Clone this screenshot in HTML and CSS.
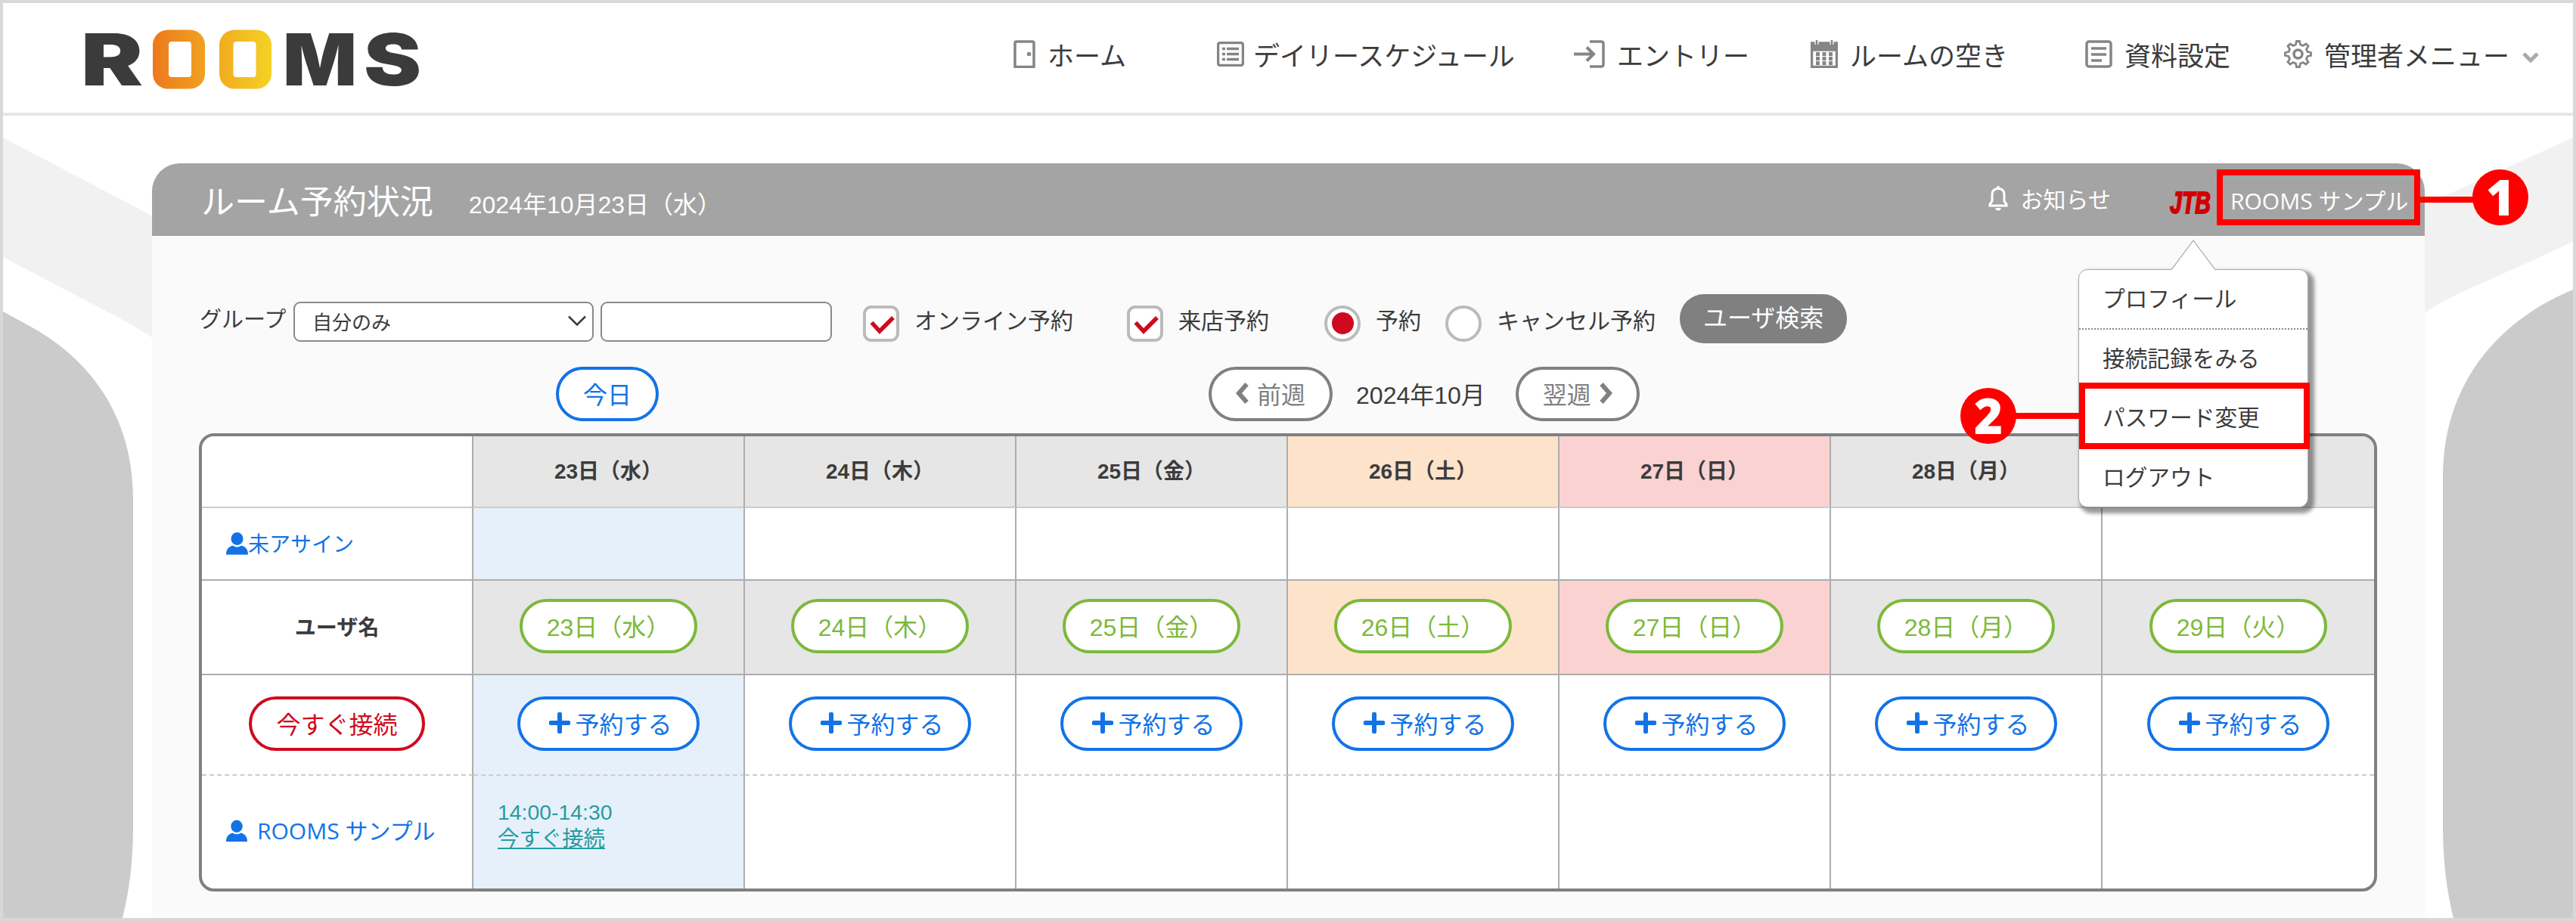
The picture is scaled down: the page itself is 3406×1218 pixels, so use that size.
FILE: index.html
```
<!DOCTYPE html>
<html lang="ja">
<head>
  <meta charset="UTF-8">
  <meta name="viewport" content="width=device-width, initial-scale=1.0">
  <title>ルーム予約状況 - ROOMS</title>
  <link rel="stylesheet" href="styles.css">
</head>
<body>
  <svg class="defs" width="0" height="0">
    <symbol id="person" viewBox="0 0 29 30">
      <ellipse cx="14.500" cy="8.500" rx="8" ry="8.500"/>
      <path d="M0 29.500C0 22 4 18.500 9 17.500Q14.500 21.500 20 17.500C25 18.500 29 22 29 29.500Z"/>
    </symbol>
    <symbol id="plus" viewBox="0 0 28 28">
      <path d="M14 2.500V25.500M2.500 14H25.500" fill="none" stroke="currentColor" stroke-width="6" stroke-linecap="round"/>
    </symbol>
    <symbol id="check" viewBox="0 0 34 26">
      <path d="M2.500 9.500L13 21L31 3" fill="none" stroke="currentColor" stroke-width="5.500"/>
    </symbol>
  </svg>

  <svg class="fundo" viewBox="0 0 3398 1210" preserveAspectRatio="none">
    <path fill="#f1f1f1" d="M0 178L200 283V444L168 424L0 336Z"/>
    <path fill="#cbcbcb" d="M0 408L33 426C116 470 172 548 172 656V1086C172 1136 167 1174 158 1210H0Z"/>
    <path fill="#f1f1f1" d="M3398 178L3200 268V411Q3225 394 3250 383L3398 316Z"/>
    <path fill="#cbcbcb" d="M3398 379L3376 389C3286 434 3226 516 3226 626V1086C3226 1136 3231 1174 3240 1210H3398Z"/>
  </svg>

  <header class="header">
    <svg class="logo" width="460" height="100" viewBox="-5 -7 460 100">
      <defs>
        <linearGradient id="grad" gradientUnits="userSpaceOnUse" x1="92" y1="0" x2="250" y2="0">
          <stop offset="0" stop-color="#ee7a1d"/>
          <stop offset="0.500" stop-color="#f1a820"/>
          <stop offset="1" stop-color="#f5d424"/>
        </linearGradient>
      </defs>
      <text x="-5" y="77" textLength="82" lengthAdjust="spacingAndGlyphs">R</text>
      <rect class="porta" x="90" y="3.500" width="69" height="78" rx="20"/>
      <rect class="vao" x="111" y="19" width="30" height="47" rx="4"/>
      <rect class="porta" x="178" y="3.500" width="69" height="78" rx="20"/>
      <rect class="vao" x="196.500" y="19" width="30" height="47" rx="4"/>
      <text x="262" y="77" textLength="98" lengthAdjust="spacingAndGlyphs">M</text>
      <text x="369" y="77" textLength="76" lengthAdjust="spacingAndGlyphs">S</text>
    </svg>
    <nav class="nav">
      <a class="home"><svg width="29" height="37" viewBox="0 0 29 37"><path d="M2 35.500V4Q2 2 4 2H25Q27 2 27 4V35.500Z"/><circle class="cheio" cx="20.500" cy="18.500" r="1"/></svg>ホーム</a>
      <a class="daily"><svg width="36" height="33" viewBox="0 0 36 33"><rect x="1.500" y="1.500" width="33" height="30" rx="3"/><path d="M13 9.500H29M13 16.500H29M13 23.500H29"/><path d="M7 9.500H11M7 16.500H11M7 23.500H11"/></svg>デイリースケジュール</a>
      <a class="entry"><svg width="41" height="37" viewBox="0 0 41 37"><path d="M21 2H36Q39 2 39 5V32Q39 35 36 35H21"/><path stroke-width="4" d="M0 18.500H26M17 9.500L26 18.500L17 27.500"/></svg>エントリー</a>
      <a class="rooms"><svg width="36" height="37" viewBox="0 0 36 37"><path d="M1.500 5H34.500V35.500H1.500Z"/><path class="cheio" d="M1 4H35V13H1Z"/><path stroke="#fff" stroke-width="5" d="M8 0V6M28 0V6"/><path stroke-width="2.500" d="M8 0V6M28 0V6"/><path stroke-width="5" stroke-dasharray="5 3.500" d="M7 18.500H30M7 24.500H30M7 30.500H30"/></svg>ルームの空き</a>
      <a class="docs"><svg width="36" height="37" viewBox="0 0 36 37"><rect x="2" y="2" width="32" height="33" rx="3"/><path stroke-width="3.500" d="M8 11H28M8 19H28M8 27H22"/></svg>資料設定</a>
      <a class="admin"><svg width="37" height="37" viewBox="0 0 37 37"><path stroke-width="2.800" d="M15.500 6L16.500 1.500H20.500L21.500 6L25 7.500L29 5L32 8L29.500 12L31 15.500L35.500 16.500V20.500L31 21.500L29.500 25L32 29L29 32L25 29.500L21.500 31L20.500 35.500H16.500L15.500 31L12 29.500L8 32L5 29L7.500 25L6 21.500L1.500 20.500V16.500L6 15.500L7.500 12L5 8L8 5L12 7.500Z"/><circle cx="18.500" cy="18.500" r="5.500"/></svg>管理者メニュー<svg class="seta" width="22" height="16" viewBox="0 0 22 16"><path d="M2 3L11 12L20 3"/></svg></a>
    </nav>
  </header>

  <main class="painel">
    <div class="titulo">
      <h1>ルーム予約状況</h1>
      <span class="data">2024年10月23日（水）</span>
      <a class="aviso"><svg width="28" height="34" viewBox="0 0 28 34"><path d="M3 27V25L6 21V13C6 7 9.500 4.500 14 4.500S22 7 22 13V21L25 25V27ZM14 4.500V1" fill="none" stroke="#fff" stroke-width="3"/><path d="M10 30H18Q17 33.500 14 33.500T10 30Z" fill="#fff"/></svg>お知らせ</a>
      <div class="usuario">
        <svg class="jtb" width="62" height="42" viewBox="0 0 62 42">
          <text x="3" y="34" textLength="54" lengthAdjust="spacingAndGlyphs">JTB</text>
        </svg>
        <span class="nome">ROOMS サンプル</span>
        <ul class="menu">
          <li>プロフィール</li>
          <li>接続記録をみる</li>
          <li>パスワード変更</li>
          <li>ログアウト</li>
        </ul>
      </div>
    </div>

    <div class="conteudo">
      <div class="filtros">
        <span class="rotulo">グループ</span>
        <div class="select">自分のみ<svg width="26" height="15" viewBox="0 0 26 15"><path d="M2 1.500L13 12.500L24 1.500" fill="none" stroke="#3c3c3c" stroke-width="2.500"/></svg></div>
        <div class="campo"></div>
        <div class="opcao online"><i class="caixa"><svg width="34" height="26"><use href="#check"/></svg></i>オンライン予約</div>
        <div class="opcao loja"><i class="caixa"><svg width="34" height="26"><use href="#check"/></svg></i>来店予約</div>
        <div class="opcao reserva"><i class="caixa radio marcado"></i>予約</div>
        <div class="opcao cancelada"><i class="caixa radio"></i>キャンセル予約</div>
        <a class="busca">ユーザ検索</a>
      </div>

      <div class="semana">
        <a class="botao azul hoje">今日</a>
        <a class="botao cinza anterior"><svg width="18" height="30" viewBox="0 0 18 30"><path d="M14.500 3L4 15L14.500 27"/></svg>前週</a>
        <span class="mes">2024年10月</span>
        <a class="botao cinza proxima">翌週<svg width="18" height="30" viewBox="0 0 18 30"><path d="M3.500 3L14 15L3.500 27"/></svg></a>
      </div>

      <div class="tabela">
        <table>
          <tr class="dias">
            <th class="vazio"></th>
            <th>23日（水）</th>
            <th>24日（木）</th>
            <th>25日（金）</th>
            <th class="sabado">26日（土）</th>
            <th class="domingo">27日（日）</th>
            <th>28日（月）</th>
            <th class="encoberto"></th>
          </tr>
          <tr class="livre">
            <td class="pessoa"><svg width="29" height="30"><use href="#person"/></svg>未アサイン</td>
            <td class="atual"></td><td></td><td></td><td></td><td></td><td></td><td></td>
          </tr>
          <tr class="nomes">
            <th class="vazio">ユーザ名</th>
            <th><a class="botao verde">23日（水）</a></th>
            <th><a class="botao verde">24日（木）</a></th>
            <th><a class="botao verde">25日（金）</a></th>
            <th class="sabado"><a class="botao verde">26日（土）</a></th>
            <th class="domingo"><a class="botao verde">27日（日）</a></th>
            <th><a class="botao verde">28日（月）</a></th>
            <th><a class="botao verde">29日（火）</a></th>
          </tr>
          <tr class="reservar">
            <td><a class="botao vermelho">今すぐ接続</a></td>
            <td class="atual"><a class="botao azul"><svg width="28" height="28"><use href="#plus"/></svg>予約する</a></td>
            <td><a class="botao azul"><svg width="28" height="28"><use href="#plus"/></svg>予約する</a></td>
            <td><a class="botao azul"><svg width="28" height="28"><use href="#plus"/></svg>予約する</a></td>
            <td><a class="botao azul"><svg width="28" height="28"><use href="#plus"/></svg>予約する</a></td>
            <td><a class="botao azul"><svg width="28" height="28"><use href="#plus"/></svg>予約する</a></td>
            <td><a class="botao azul"><svg width="28" height="28"><use href="#plus"/></svg>予約する</a></td>
            <td><a class="botao azul"><svg width="28" height="28"><use href="#plus"/></svg>予約する</a></td>
          </tr>
          <tr class="agenda">
            <td class="pessoa"><svg width="28" height="30"><use href="#person"/></svg><span class="nome">ROOMS サンプル</span></td>
            <td class="atual"><div class="evento">14:00-14:30<br><u>今すぐ接続</u></div></td>
            <td></td><td></td><td></td><td></td><td></td><td></td>
          </tr>
        </table>
      </div>
    </div>
  </main>

  <div class="marca m1"></div>
  <div class="linha l1"></div>
  <div class="numero n1">1</div>
  <div class="marca m2"></div>
  <div class="linha l2"></div>
  <div class="numero n2">2</div>
</body>
</html>
```

FILE: styles.css
```
:root {
  --texto: #3c3c3c;
  --azul: #1373e6;
  --cinza: #808080;
  --vermelho: #cf0a20;
  --verde: #7cb93a;
  --linha: #adadad;
}

* {
  margin: 0;
  padding: 0;
  box-sizing: border-box;
}

body {
  position: relative;
  width: 3406px;
  height: 1218px;
  overflow: hidden;
  border: 4px solid #d8d8d8;
  background: #fff;
  color: var(--texto);
  font-family: "Liberation Sans", "Noto Sans CJK JP", sans-serif;
  font-size: 30px;
}

.defs,
.fundo {
  position: absolute;
  top: 0;
  left: 0;
}

.fundo {
  width: 3398px;
  height: 1210px;
}

/* topo */
.header {
  position: relative;
  display: flex;
  height: 149px;
  background: #fff;
  border-bottom: 4px solid #e6e6e6;
}

.logo {
  margin: 25px 0 0 103px;
  overflow: visible;
}

.logo text {
  font-family: Inter, sans-serif;
  font-weight: 900;
  font-size: 95px;
  fill: #3b3b3b;
}

.logo .porta { fill: url(#grad); }
.logo .vao { fill: #fff; }

.nav {
  display: grid;
  grid-template-columns: 269px 472px 313px 363px 263px auto;
  height: 135px;
  margin-left: 773px;
  font-size: 35px;
}

.nav a {
  display: flex;
  align-items: center;
  white-space: nowrap;
}

.nav svg {
  margin-right: 16px;
  fill: none;
  stroke: #858585;
  stroke-width: 3.5;
}

.nav .daily svg {
  margin-right: 12px;
}

.nav .cheio {
  fill: #858585;
}

.nav svg.seta {
  margin: 8px 0 0 17px;
  stroke: #aaa;
  stroke-width: 5;
}

/* painel principal */
.painel {
  position: relative;
  width: 3005px;
  height: 998px;
  margin: 63px 0 0 197px;
  background: #fafafa;
  border-radius: 37px 37px 0 0;
}

.titulo {
  display: flex;
  align-items: center;
  height: 96px;
  padding-left: 65px;
  background: #a4a4a4;
  border-radius: 37px 37px 0 0;
  color: #fff;
}

.titulo h1 {
  font-size: 44px;
  font-weight: 400;
}

.titulo .data {
  margin: 7px 0 0 47px;
  font-size: 32px;
}

.aviso {
  display: flex;
  align-items: center;
  gap: 16px;
  margin-left: auto;
  margin-top: -4px;
  font-size: 30px;
}

.usuario {
  position: relative;
  display: flex;
  align-items: center;
  width: 320px;
  height: 92px;
  margin-left: 75px;
  margin-right: 20px;
}

.jtb {
  margin-right: 21px;
  margin-top: 10px;
  overflow: visible;
}

.jtb text {
  font-family: "Liberation Sans", sans-serif;
  font-size: 41px;
  font-weight: bold;
  font-style: italic;
  fill: #d00000;
  stroke: #d00000;
  stroke-width: 2;
}

.nome {
  font-family: "Open Sans", "Noto Sans CJK JP", sans-serif;
  font-size: 30px;
  font-weight: 400;
  white-space: nowrap;
}

.menu {
  position: absolute;
  z-index: 2;
  top: 138px;
  left: -118px;
  width: 304px;
  height: 315px;
  list-style: none;
  background: #fff;
  border: 1px solid #aaa;
  border-radius: 12px;
  box-shadow: 5px 5px 5px 3px rgba(0, 0, 0, 0.4);
  color: var(--texto);
}

/* seta do balao: contorno e preenchimento */
.menu::before,
.menu::after {
  content: "";
  position: absolute;
  top: -40px;
  left: 121px;
  width: 60px;
  height: 40px;
  background: #aaa;
  clip-path: polygon(50% 0, 100% 100%, 0 100%);
}

.menu::after {
  top: -38px;
  background: #fff;
}

.menu li {
  height: 78.5px;
  padding-left: 31px;
  line-height: 77px;
  font-size: 29.7px;
  border-bottom: 2px dotted #888;
}

.menu li:last-child {
  border-bottom: none;
}

/* filtros */
.conteudo {
  padding: 77px 0 0 62px;
}

.filtros {
  display: flex;
  height: 65px;
  align-items: center;
  white-space: nowrap;
}

.rotulo {
  width: 125px;
  margin-top: -3px;
  padding-left: 1px;
  font-size: 29px;
}

.select,
.campo {
  height: 53px;
  margin-top: 8px;
  background: #fff;
  border: 2px solid #8a8a8a;
  border-radius: 9px;
}

.select {
  display: flex;
  align-items: center;
  justify-content: space-between;
  width: 397px;
  padding: 0 7px 2px 23px;
  font-size: 26px;
}

.campo {
  width: 306px;
  margin-left: 9px;
}

.opcao {
  display: flex;
  align-items: center;
}

.opcao.online { margin-left: 41px; }
.opcao.loja { margin-left: 71px; }
.opcao.reserva { margin-left: 73px; }
.opcao.cancelada { margin-left: 32px; }

.caixa {
  display: flex;
  align-items: center;
  justify-content: center;
  width: 48px;
  height: 48px;
  margin: 12px 20px 0 0;
  background: #fff;
  border: 4px solid #bbb;
  border-radius: 11px;
  color: var(--vermelho);
}

.caixa svg {
  flex: none;
  margin: 4px 0 0 3px;
}

.radio {
  border-radius: 50%;
}

.marcado::before {
  content: "";
  width: 29px;
  height: 29px;
  background: var(--vermelho);
  border-radius: 50%;
}

.busca {
  height: 65px;
  margin-left: 32px;
  padding: 0 31px;
  line-height: 65px;
  font-size: 32px;
  background: var(--cinza);
  border-radius: 32px;
  color: #fff;
}

/* navegacao da semana */
.semana {
  display: flex;
  align-items: center;
  height: 72px;
  margin-top: 31px;
  font-size: 32px;
}

.botao {
  display: inline-flex;
  align-items: center;
  height: 72px;
  padding: 0 32px 2px;
  border: 4px solid;
  border-radius: 36px;
  background: #fff;
  font-size: 32px;
  font-weight: 400;
  white-space: nowrap;
}

.azul { color: var(--azul); }
.cinza { color: var(--cinza); }
.verde { color: var(--verde); }
.vermelho { color: var(--vermelho); }

.azul svg {
  margin: 0 6px 0 6px;
}

.cinza svg {
  fill: none;
  stroke: var(--cinza);
  stroke-width: 6;
}

.hoje { margin-left: 472px; }

.anterior {
  gap: 10px;
  margin-left: 727px;
}

.mes {
  margin: 0 40px 2px 31px;
}

.proxima {
  gap: 10px;
}

/* agenda */
.tabela {
  width: 2880px;
  height: 606px;
  margin-top: 16px;
  overflow: hidden;
  background: #fff;
  border: 4px solid var(--cinza);
  border-radius: 20px;
}

table {
  width: 100%;
  table-layout: fixed;
  border-collapse: separate;
  border-spacing: 0;
}

th,
td {
  border-right: 2px solid var(--linha);
  border-bottom: 2px solid var(--linha);
  font-size: 28px;
  text-align: center;
  vertical-align: middle;
}

th:last-child,
td:last-child {
  border-right: none;
}

th {
  background: #e6e6e6;
}

th.vazio { background: #fff; }
th.sabado { background: #fde3ca; }
th.domingo { background: #fad2d2; }
td.atual { background: #e6f0fa; }

.dias th {
  height: 95px;
  padding-bottom: 5px;
  border-bottom-color: #ccc;
}

.livre td { height: 96px; }
.livre .pessoa { padding-bottom: 3px; }

.nomes th {
  height: 125px;
  padding-bottom: 3px;
}

.reservar td {
  height: 133px;
  padding-bottom: 3px;
  border-bottom: 2px dashed #ccc;
}

.agenda td {
  height: 149px;
  border-bottom: none;
}

td.pessoa {
  padding-left: 32px;
  color: var(--azul);
  text-align: left;
}

.agenda td.pessoa {
  padding-bottom: 7px;
}

.pessoa svg {
  fill: var(--azul);
  vertical-align: -4px;
}

.pessoa .nome {
  margin-left: 13px;
}

.evento {
  padding: 0 0 17px 32px;
  line-height: 35px;
  font-size: 28.4px;
  color: #269ca0;
  text-align: left;
}

/* marcadores */
.marca,
.linha,
.numero {
  position: absolute;
  z-index: 3;
}

.marca { border: 8px solid #f00; }

.linha {
  height: 8px;
  background: #f00;
}

.numero {
  width: 74px;
  height: 74px;
  border-radius: 50%;
  background: #f00;
  color: #fff;
  font: 800 65px/72px "Open Sans", sans-serif;
  text-align: center;
}

.m1 { left: 2927px; top: 220px; width: 269px; height: 74px; }
.l1 { left: 3196px; top: 256px; width: 75px; }
.n1 { left: 3265px; top: 220px; }
.m2 { left: 2745px; top: 502px; width: 305px; height: 88px; }
.l2 { left: 2655px; top: 542px; width: 90px; }
.n2 { left: 2588px; top: 509px; }
```
